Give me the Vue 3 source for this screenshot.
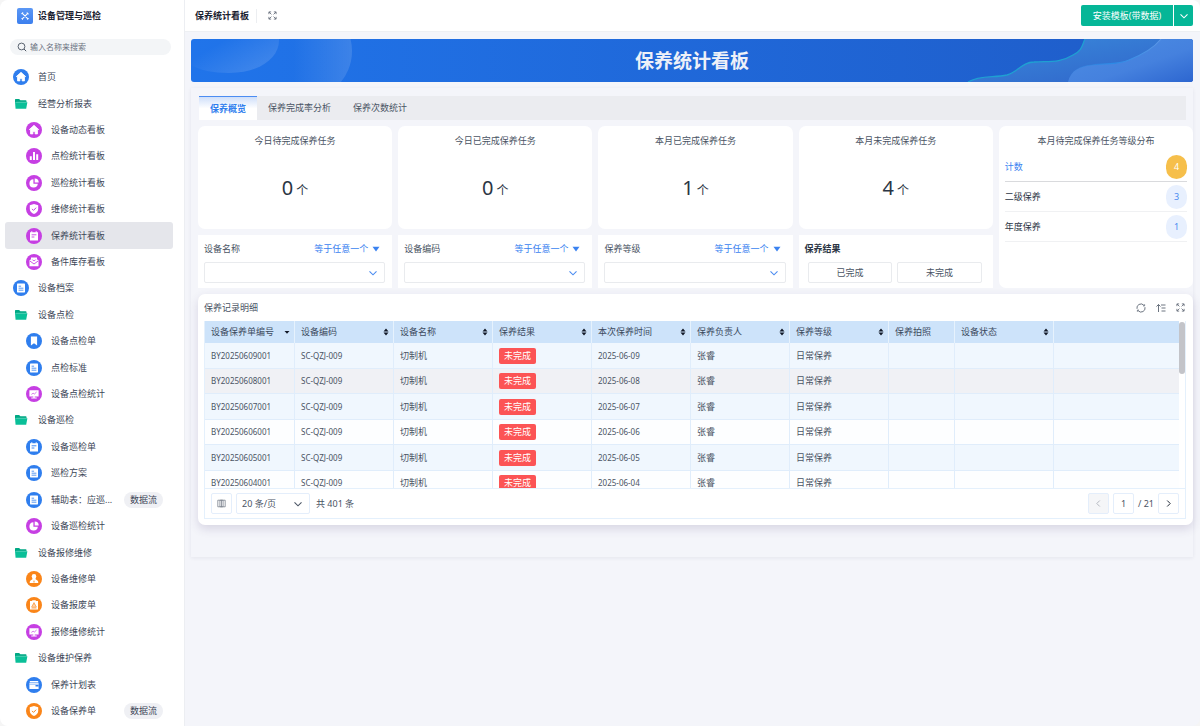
<script setup>
import { ref } from 'vue'

const nav = [
  { text: '首页', icon: 'home', color: 'blue' },
  { text: '经营分析报表', icon: 'folder' },
  { text: '设备动态看板', icon: 'home', color: 'purple', sub: true },
  { text: '点检统计看板', icon: 'bars', color: 'purple', sub: true },
  { text: '巡检统计看板', icon: 'pie', color: 'purple', sub: true },
  { text: '维修统计看板', icon: 'shield', color: 'purple', sub: true },
  { text: '保养统计看板', icon: 'note', color: 'purple', sub: true, active: true },
  { text: '备件库存看板', icon: 'mail', color: 'purple', sub: true },
  { text: '设备档案', icon: 'doc', color: 'blue' },
  { text: '设备点检', icon: 'folder' },
  { text: '设备点检单', icon: 'bookmark', color: 'blue', sub: true },
  { text: '点检标准', icon: 'doc', color: 'blue', sub: true },
  { text: '设备点检统计', icon: 'screen', color: 'purple', sub: true },
  { text: '设备巡检', icon: 'folder' },
  { text: '设备巡检单', icon: 'note', color: 'blue', sub: true },
  { text: '巡检方案', icon: 'doc', color: 'blue', sub: true },
  { text: '辅助表：应巡...', icon: 'doc', color: 'blue', sub: true, tag: '数据流' },
  { text: '设备巡检统计', icon: 'pie', color: 'purple', sub: true },
  { text: '设备报修维修', icon: 'folder' },
  { text: '设备维修单', icon: 'user', color: 'orange', sub: true },
  { text: '设备报废单', icon: 'clip', color: 'orange', sub: true },
  { text: '报修维修统计', icon: 'screen', color: 'purple', sub: true },
  { text: '设备维护保养', icon: 'folder' },
  { text: '保养计划表', icon: 'wallet', color: 'blue', sub: true },
  { text: '设备保养单', icon: 'shield', color: 'orange', sub: true, tag: '数据流' },
]
const tabs = ['保养概览', '保养完成率分析', '保养次数统计']
const activeTab = ref(0)
const stats = [
  { title: '今日待完成保养任务', value: 0 },
  { title: '今日已完成保养任务', value: 0 },
  { title: '本月已完成保养任务', value: 1 },
  { title: '本月未完成保养任务', value: 4 },
]
const filters = ['设备名称', '设备编码', '保养等级']
const levels = [
  { name: '计数', count: 4, total: true },
  { name: '二级保养', count: 3 },
  { name: '年度保养', count: 1 },
]
const columns = [
  { text: '设备保养单编号', sort: 'down', cls: 'c-no' },
  { text: '设备编码', sort: 'both', cls: 'c-std' },
  { text: '设备名称', sort: 'both', cls: 'c-std' },
  { text: '保养结果', sort: 'both', cls: 'c-std' },
  { text: '本次保养时间', sort: 'both', cls: 'c-std' },
  { text: '保养负责人', sort: 'both', cls: 'c-std' },
  { text: '保养等级', sort: 'both', cls: 'c-std' },
  { text: '保养拍照', cls: 'c-photo' },
  { text: '设备状态', sort: 'both', cls: 'c-std' },
  { text: '', cls: 'c-rest' },
]
const rows = ['09', '08', '07', '06', '05', '04'].map((d) => ({
  no: `BY202506${d}001`,
  date: `2025-06-${d}`,
}))
const page = ref('1')
</script>

<template>
  <svg class="sprite" aria-hidden="true">
    <symbol id="i-home" viewBox="0 0 16 16"><path d="M8 3.300 3.300 7.600h1.200v4.300h2.400V9.400h2.200v2.500h2.400V7.600h1.200z" fill="currentColor" stroke="currentColor" stroke-width=".8" stroke-linejoin="round" /></symbol>
    <symbol id="i-folder" viewBox="0 0 16 16"><path d="M2 3.600c0-.4.3-.7.700-.7h3.400l1.300 1.300h5.400c.4 0 .7.3.7.7v1.600H2z" fill="#00a884" /><path d="M2 6.300H14.400L13.200 12.800H2.600z" fill="#0abf98" /><path d="M3.200 6.200H13.500" stroke="#8fe0cd" stroke-width=".4" /></symbol>
    <symbol id="i-bars" viewBox="0 0 16 16"><path d="M3.800 8.200h2v3.800h-2zM7 4h2v8H7zM10.200 6.300h2V12h-2z" fill="currentColor" /></symbol>
    <symbol id="i-pie" viewBox="0 0 16 16"><path d="M7.400 4.200A4.200 4.200 0 1 0 11.800 8.800H7.400z" fill="currentColor" /><path d="M8.700 3.400v4h4a4 4 0 0 0-4-4z" fill="currentColor" /></symbol>
    <symbol id="i-shield" viewBox="0 0 16 16"><path d="M8 3 12.200 4.300v3.800c0 2.500-2 4-4.200 5-2.200-1-4.200-2.500-4.200-5V4.300z" fill="currentColor" /><path d="m6 7.900 1.500 1.500 2.600-2.700" fill="none" stroke="var(--tone)" stroke-width="1" /></symbol>
    <symbol id="i-note" viewBox="0 0 16 16"><path d="M4 4.200h1.300V3.200h1v1h3.400v-1h1v1H12v8.300H4z" fill="currentColor" /><path d="M5.600 6.800h4.800M5.600 9h2.800" stroke="var(--tone)" stroke-width=".9" /></symbol>
    <symbol id="i-mail" viewBox="0 0 16 16"><path d="M5 3.600h6v4H5zM3.500 6.300 5 5.300h6l1.500 1v6h-9z" fill="currentColor" /><path d="M3.900 7 8 10l4.100-3" fill="none" stroke="var(--tone)" stroke-width=".9" /><path d="M6.400 5.600c.4 1.500 2.800 1.500 3.200 0" fill="none" stroke="var(--tone)" stroke-width=".8" /></symbol>
    <symbol id="i-doc" viewBox="0 0 16 16"><rect x="4" y="3.600" width="8" height="8.800" rx=".6" fill="currentColor" /><path d="M5.600 6.200h2.500M5.600 8.200h4.800M5.600 10.200h4.800" stroke="var(--tone)" stroke-width=".8" /></symbol>
    <symbol id="i-bookmark" viewBox="0 0 16 16"><path d="M4.900 3.600h6.200v9L8 10.300l-3.100 2.300z" fill="currentColor" /></symbol>
    <symbol id="i-screen" viewBox="0 0 16 16"><path d="M3.400 4.200h9.200v6.300H8.700v1h2v.9H5.300v-.9h2v-1H3.400z" fill="currentColor" /><path d="m5.400 8.400 1.700-1.200 1.300.8 2.200-2" fill="none" stroke="var(--tone)" stroke-width=".7" /></symbol>
    <symbol id="i-user" viewBox="0 0 16 16"><circle cx="8" cy="5.400" r="2.300" fill="currentColor" /><path d="M6.600 7h2.800l.4 1.600c1.700.4 2.500 1.500 2.500 3.400H3.700c0-1.900.8-3 2.500-3.400z" fill="currentColor" /><path d="M8 8.800 8.600 11l-.6.800-.6-.8z" fill="var(--tone)" /></symbol>
    <symbol id="i-clip" viewBox="0 0 16 16"><path d="M4 4h2.200V3.200h3.600V4H12v8.600H4z" fill="currentColor" /><path d="M8 5.600 10.300 10H5.700zM5.500 11h5" fill="none" stroke="var(--tone)" stroke-width=".7" /><path d="M8 7V9.500" stroke="var(--tone)" stroke-width=".7" /></symbol>
    <symbol id="i-wallet" viewBox="0 0 16 16"><path d="M3.800 3.900h8.400v1.300H3.800zM3.400 5.800h9.200V12H3.400z" fill="currentColor" /><path d="M9.500 8.100h3.100v1.500H9.500z" fill="var(--tone)" /><path d="M3.400 7.200h9.200" stroke="var(--tone)" stroke-width=".5" /></symbol>
    <symbol id="i-chev" viewBox="0 0 10 10"><path d="m1.500 3.300 3.500 3.500 3.500-3.500" fill="none" stroke="currentColor" stroke-width="1.100" /></symbol>
    <symbol id="i-expand" viewBox="0 0 10 10"><path d="M1 3.500V1h2.500M6.500 1H9v2.500M9 6.500V9H6.500M3.500 9H1V6.500M1.200 1.200l2.600 2.600M8.800 1.200 6.200 3.800M8.800 8.800 6.200 6.200M1.200 8.800l2.600-2.600" fill="none" stroke="currentColor" stroke-width=".9" /></symbol>
  </svg>

  <div class="app">
    <aside class="side">
      <div class="brand">
        <span class="logo">
          <svg viewBox="0 0 16 16" aria-hidden="true"><path d="m5.300 5.300 5.600 5.600M10.700 5.300l-5.400 5.600" stroke="#fff" stroke-width="1.100" stroke-linecap="round" /><path d="M4.300 5.700a1.400 1.400 0 0 0 1.500-1.500M10.100 4.300a1.500 1.500 0 0 0 1.700 1.700M4.500 10.500l1.200 1.200M10.400 11.600l1.300-1.300" fill="none" stroke="#fff" stroke-width=".9" /></svg>
        </span>
        <strong>设备管理与巡检</strong>
      </div>
      <label class="search">
        <svg viewBox="0 0 10 10" aria-hidden="true"><circle cx="4.500" cy="4.500" r="3.400" fill="none" stroke="#4b5563" stroke-width=".9" /><path d="m7 7 2.200 2.200" stroke="#4b5563" stroke-width="1" /></svg>
        <input type="text" placeholder="输入名称来搜索" aria-label="搜索" />
      </label>
      <nav class="nav">
        <a v-for="n in nav" :key="n.text" href="#" class="item" :class="{ sub: n.sub, active: n.active }">
          <span class="ico" :class="n.color || 'plain'"><svg aria-hidden="true"><use :href="'#i-' + n.icon" /></svg></span>
          <span class="label">{{ n.text }}</span>
          <span v-if="n.tag" class="tag">{{ n.tag }}</span>
        </a>
      </nav>
    </aside>

    <main class="main">
      <header class="top">
        <h1>保养统计看板</h1>
        <button class="icon-btn" aria-label="全屏"><svg class="i9"><use href="#i-expand" /></svg></button>
        <div class="install">
          <button class="install-main">安装模板(带数据)</button>
          <button class="install-more" aria-label="更多"><svg class="i10"><use href="#i-chev" /></svg></button>
        </div>
      </header>

      <div class="content">
        <section class="banner">
          <svg class="deco-left" viewBox="0 0 170 43" aria-hidden="true">
            <defs>
              <linearGradient id="gl1" x1=".4" y1="0" x2="1" y2=".4"><stop offset="0" stop-color="#fff" stop-opacity="0" /><stop offset="1" stop-color="#fff" stop-opacity=".12" /></linearGradient>
              <linearGradient id="gl2"><stop offset=".4" stop-color="#fff" stop-opacity="0" /><stop offset="1" stop-color="#fff" stop-opacity=".13" /></linearGradient>
            </defs>
            <path d="M0 0h88c1 18-18 34-50 34C22 34 8 31 0 26z" fill="url(#gl1)" />
            <circle cx="112" cy="12" r="49" fill="url(#gl2)" />
          </svg>
          <svg class="deco-right" viewBox="0 0 240 43" aria-hidden="true">
            <defs>
              <linearGradient id="gr1" x1="0" y1="0" x2="1" y2="1"><stop offset="0" stop-color="#3a8adb" /><stop offset="1" stop-color="#2f62c9" /></linearGradient>
              <linearGradient id="gr2" x1="0" y1="0" x2="1" y2="1"><stop offset=".2" stop-color="#4a8ae2" /><stop offset=".6" stop-color="#4581de" /><stop offset="1" stop-color="#2d66d0" /></linearGradient>
              <linearGradient id="gs"><stop offset="0" stop-color="#2c8be6" stop-opacity="0" /><stop offset=".5" stop-color="#2c8be6" /><stop offset="1" stop-color="#5c97e6" /></linearGradient>
            </defs>
            <path d="M15 43C27 36 41 39 54 36 65 33 69 23 81 23c16-1 26 1 39-7 10-5 9-10 12-16h109v43z" fill="url(#gr1)" />
            <path d="M15 43C27 36 41 39 54 36 65 33 69 23 81 23c16-1 26 1 39-7 10-5 9-10 12-16" fill="none" stroke="#1fa0d2" stroke-width="1.300" />
            <path d="M115 43c3-12 12-16 24-17 15-2 26 0 37-5 15-6 25-12 32-21h32v43z" fill="url(#gr2)" />
            <path d="M115 43c3-12 12-16 24-17 15-2 26 0 37-5 15-6 25-12 32-21" fill="none" stroke="url(#gs)" stroke-width="1.100" />
          </svg>
          <h2>保养统计看板</h2>
        </section>

        <section class="panel">
          <div class="tabs" role="tablist">
            <button v-for="(t, i) in tabs" :key="t" role="tab" :aria-selected="activeTab === i" :class="{ on: activeTab === i }" @click="activeTab = i">{{ t }}</button>
          </div>

          <div class="grid">
            <article v-for="s in stats" :key="s.title" class="card stat">
              <h3>{{ s.title }}</h3>
              <p><b>{{ s.value }}</b><span>个</span></p>
            </article>
            <article class="card levels">
              <h3>本月待完成保养任务等级分布</h3>
              <ul>
                <li v-for="l in levels" :key="l.name" :class="{ total: l.total }">
                  <span>{{ l.name }}</span><em>{{ l.count }}</em>
                </li>
              </ul>
            </article>
            <div v-for="(f, i) in filters" :key="f" class="filter">
              <div class="filter-head">
                <label :for="'f' + i">{{ f }}</label>
                <button>等于任意一个<svg class="tri" viewBox="0 0 8 6" aria-hidden="true"><path d="M.500.800h7L4 5.400z" fill="currentColor" /></svg></button>
              </div>
              <div class="select">
                <select :id="'f' + i"><option></option></select>
                <svg class="i10" aria-hidden="true"><use href="#i-chev" /></svg>
              </div>
            </div>
            <div class="filter">
              <div class="filter-head"><strong>保养结果</strong></div>
              <div class="choices"><button>已完成</button><button>未完成</button></div>
            </div>
          </div>

          <article class="card records">
            <header>
              <h3>保养记录明细</h3>
              <button class="icon-btn" aria-label="刷新"><svg class="i10" viewBox="0 0 10 10"><path d="M1 5.800A4 4 0 0 1 7.800 2.200M9 4.200A4 4 0 0 1 2.200 7.800" fill="none" stroke="currentColor" stroke-width=".9" /><path d="M7 2.900h1.600V1.300M3 7.100H1.400v1.600" fill="none" stroke="currentColor" stroke-width=".8" /></svg></button>
              <button class="icon-btn" aria-label="排序"><svg class="i10" viewBox="0 0 10 10"><path d="M2.500 9V1.500M.5 3.500l2-2 2 2M5 2h4.500M5.500 5h4M5.500 8h4" fill="none" stroke="currentColor" stroke-width=".9" /></svg></button>
              <button class="icon-btn" aria-label="放大"><svg class="i9"><use href="#i-expand" /></svg></button>
            </header>
            <div class="frame">
              <div class="view">
                <div class="clip">
                  <table>
                    <thead>
                      <tr>
                        <th v-for="(c, i) in columns" :key="i" :class="c.cls">
                          <div class="th">
                            <span>{{ c.text }}</span>
                            <svg v-if="c.sort" viewBox="0 0 6 8" aria-hidden="true"><path v-if="c.sort === 'both'" d="M3 .6 5.500 3.400h-5zM3 7.400.500 4.600h5z" fill="#111827" /><path v-else d="M.500 3h5L3 5.800z" fill="#111827" /></svg>
                          </div>
                        </th>
                      </tr>
                    </thead>
                    <tbody>
                      <tr v-for="(r, i) in rows" :key="r.no" :class="{ hover: i === 1 }">
                        <td class="num">{{ r.no }}</td>
                        <td class="num">SC-QZJ-009</td>
                        <td>切制机</td>
                        <td><span class="pill">未完成</span></td>
                        <td class="num">{{ r.date }}</td>
                        <td>张睿</td>
                        <td>日常保养</td>
                        <td></td>
                        <td></td>
                        <td></td>
                      </tr>
                    </tbody>
                  </table>
                </div>
                <div class="track"><div class="thumb"></div></div>
              </div>
              <footer>
                <button class="box" aria-label="列设置"><svg class="i9" viewBox="0 0 9 9"><path d="M.8 1.200h7.400v6.600H.8zM3.300 1.200h2.400M4.500 1.500v6M3.300 7.800h2.400M2.900 1.200v6.600M6.100 1.200v6.600" fill="none" stroke="#6b7280" stroke-width=".7" /></svg></button>
                <div class="select size">
                  <select aria-label="每页条数"><option>20 条/页</option></select>
                  <svg class="i10" aria-hidden="true"><use href="#i-chev" /></svg>
                </div>
                <span>共 401 条</span>
                <div class="pager">
                  <button class="box off" disabled aria-label="上一页"><svg class="i9" viewBox="0 0 9 9"><path d="M5.800 1.500 2.800 4.500l3 3" fill="none" stroke="#b4b8c0" /></svg></button>
                  <input v-model="page" class="box" type="text" aria-label="页码" />
                  <span>/ 21</span>
                  <button class="box" aria-label="下一页"><svg class="i9" viewBox="0 0 9 9"><path d="m3.200 1.500 3 3-3 3" fill="none" stroke="#1f2937" /></svg></button>
                </div>
              </footer>
            </div>
          </article>
        </section>
      </div>
    </main>
  </div>
</template>

<style>
body { background: #f5f5f5; }
</style>

<style scoped>
.sprite { position: absolute; width: 0; height: 0; }
.app, .app * { box-sizing: border-box; }
.app {
  display: flex; min-height: 100vh; background: #f4f5fa; color: #4a5464;
  border-radius: 8px; overflow: hidden;
  font: 9px/14px "Noto Sans", "Noto Sans CJK SC", sans-serif;
}
h1, h2, h3, p, ul { margin: 0; padding: 0; font-size: inherit; font-weight: 400; }
button, input, select { font: inherit; color: inherit; border: 0; padding: 0; margin: 0; background: none; outline: 0; }
button { cursor: pointer; }
svg { display: block; flex: none; }
.i9 { width: 9px; height: 9px; }
.i10 { width: 10px; height: 10px; }

.side { width: 185px; flex: none; display: flex; flex-direction: column; background: #fff; border-right: 1px solid #eceef2; padding-bottom: 2px; }
.brand { display: flex; align-items: center; gap: 5px; height: 32px; padding-left: 17px; color: #1a2130; }
.logo { width: 16px; height: 16px; border-radius: 2px; background: linear-gradient(#5b97f5, #3c7fee); }
.search { display: flex; align-items: center; gap: 3px; height: 16px; margin: 7px 13px 9px 10px; padding: 0 7px; border-radius: 8px; background: #f3f5f7; }
.search svg { width: 10px; height: 10px; }
.search input { width: 100%; font-size: 8px; line-height: 14px; }
.search input::placeholder { color: #6b7280; opacity: 1; }
.nav { flex: 1; display: flex; flex-direction: column; padding: 0 11px 0 5px; }
.item { flex: 1 0 26px; display: flex; align-items: center; gap: 9px; padding: 0 10px 0 8px; border-radius: 3px; color: #3c4657; text-decoration: none; }
.item.sub { padding-left: 21px; }
.item.active { background: #e5e6eb; }
.ico { width: 16px; height: 16px; border-radius: 50%; color: #fff; background: var(--tone); }
.ico svg { width: 16px; height: 16px; }
.blue { --tone: #2f7eee; }
.purple { --tone: #c63fe3; }
.orange { --tone: #fa8519; }
.tag { margin-left: auto; padding: 1px 6px; border-radius: 8px; background: #eff0f4; }

.main { flex: 1; min-width: 0; }
.top { display: flex; align-items: center; height: 32px; padding: 0 7px 0 10px; background: #fff; border-bottom: 1px solid #eef0f3; }
.top h1 { font-weight: 700; color: #1a2130; padding-right: 7px; margin-right: 11px; border-right: 1px solid #eceef1; }
.icon-btn { color: #5b6472; }
.install { margin-left: auto; display: flex; gap: 1px; height: 21px; color: #fff; }
.install button { background: #05b697; }
.install-main { width: 92px; border-radius: 2px 0 0 2px; }
.install-more { width: 19px; border-radius: 0 2px 2px 0; display: grid; place-items: center; }

.content { padding: 7px 7px 7px 6px; }
.banner { position: relative; display: grid; place-items: center; height: 43px; border-radius: 3px; overflow: hidden; color: #eef1f8; background: linear-gradient(90deg, #2074ea, #1f5cc8); }
.banner h2 { position: relative; font-size: 19px; line-height: 28px; font-weight: 700; }
.deco-left, .deco-right { position: absolute; top: 0; height: 43px; }
.deco-left { left: 0; width: 170px; }
.deco-right { right: 0; width: 240px; }

.panel { margin-top: 6px; padding: 8px 0 32px 7px; box-shadow: 0 1px 4px rgba(30, 30, 70, .07); }
.tabs { display: flex; height: 24px; margin: 0 7px 0 1px; background: #ebecf0; }
.tabs button { padding: 0 11px; }
.tabs .on { color: #2f7eee; font-weight: 700; border-top: 1px solid #4b8cf2; background: linear-gradient(#cfdffa, #fff 50%); }

.grid { display: grid; grid-template-columns: repeat(5, minmax(0, 1fr)); grid-template-rows: 103px 53px; gap: 6px; margin: 6px 0; }
.card { background: #fff; border-radius: 7px; }
.stat { display: flex; flex-direction: column; padding-top: 8px; text-align: center; }
.stat p { margin-top: 26px; color: #2b3544; }
.stat b { font-size: 20px; line-height: 28px; font-weight: 400; margin-right: 3px; }
.stat span { font-size: 12px; }
.levels { grid-column: 5; grid-row: 1 / 3; padding: 8px 6px 0; text-align: center; }
.levels ul { list-style: none; margin-top: 4px; }
.levels li { display: flex; align-items: center; justify-content: space-between; height: 30px; border-bottom: 1px solid #f0f1f3; color: #2b3544; }
.levels em { width: 21px; line-height: 24px; border-radius: 12px; font-style: normal; background: #e8f0fe; color: #4a8bf0; }
.levels .total { color: #3a82f0; border-color: #d9dadd; }
.levels .total em { background: #f6bf4b; color: #fff; }

.filter { background: #fff; padding: 7px 7px 5px 6px; }
.filter-head { display: flex; justify-content: space-between; margin-bottom: 6px; }
.filter-head button { display: flex; align-items: center; gap: 4px; margin-right: 5px; color: #3a82f0; }
.filter-head strong { color: #2b3544; }
.tri { width: 8px; height: 6px; }
.select { position: relative; height: 21px; border: 1px solid #e9ebee; border-radius: 2px; color: #4a8bf0; }
.select select { width: 100%; height: 100%; appearance: none; padding-left: 5px; }
.select svg { position: absolute; right: 6px; top: 5px; pointer-events: none; }
.choices { display: flex; gap: 5px; padding: 0 4px 0 3px; }
.choices button { flex: 1; height: 21px; border: 1px solid #e9ebee; border-radius: 2px; }

.records { padding: 0 7px 6px 6px; box-shadow: 0 4px 10px rgba(70, 50, 110, .16); }
.records header { display: flex; align-items: center; height: 27px; gap: 10px; padding-right: 1px; }
.records h3 { flex: 1; }
.frame { border: 1px solid #e4f0fc; border-top: 0; }
.view { display: flex; height: 168px; border-bottom: 1px solid #e4f0fc; }
.clip { flex: 1; min-width: 0; overflow: hidden; }
table { width: 100%; table-layout: fixed; border-collapse: separate; border-spacing: 0; }
.c-no { width: 90px; }
.c-std { width: 99px; }
.c-photo { width: 66px; }
th { height: 22px; padding: 0 4px 0 6px; background: #cde3fa; border-right: 1px solid #e6f2fd; font-weight: 400; text-align: left; color: #3c4a5e; }
th:last-child, td:last-child { border-right: 0; }
.th { display: flex; align-items: center; justify-content: space-between; white-space: nowrap; }
.th svg { width: 6px; height: 8px; }
td { height: 25px; padding: 0 6px; border-right: 1px solid #e0edfb; border-bottom: 1px solid #e0edfb; }
tbody tr:nth-child(odd) td { height: 26px; background: #f0f7fe; }
tbody tr.hover td { background: #f0f1f5; }
tbody tr:nth-child(even):not(.hover) td { background: #fdfeff; }
.num { font-size: 8px; }
.pill { display: inline-block; padding: 1px 5px; border-radius: 2px; background: #fc5455; color: #fff; vertical-align: middle; }
.track { width: 6px; padding-top: 1px; }
.thumb { height: 52px; border-radius: 3px; background: #c3c4c9; }
footer { display: flex; align-items: center; gap: 6px; height: 29px; padding: 0 6px; }
.box { width: 21px; height: 21px; border: 1px solid #e4eefb; border-radius: 2px; display: grid; place-items: center; text-align: center; }
.off { background: #f5f6f8; }
.size { width: 74px; margin-left: -2px; border-color: #e4eefb; color: #4a5464; }
.pager { margin-left: auto; display: flex; align-items: center; gap: 4px; }
</style>
